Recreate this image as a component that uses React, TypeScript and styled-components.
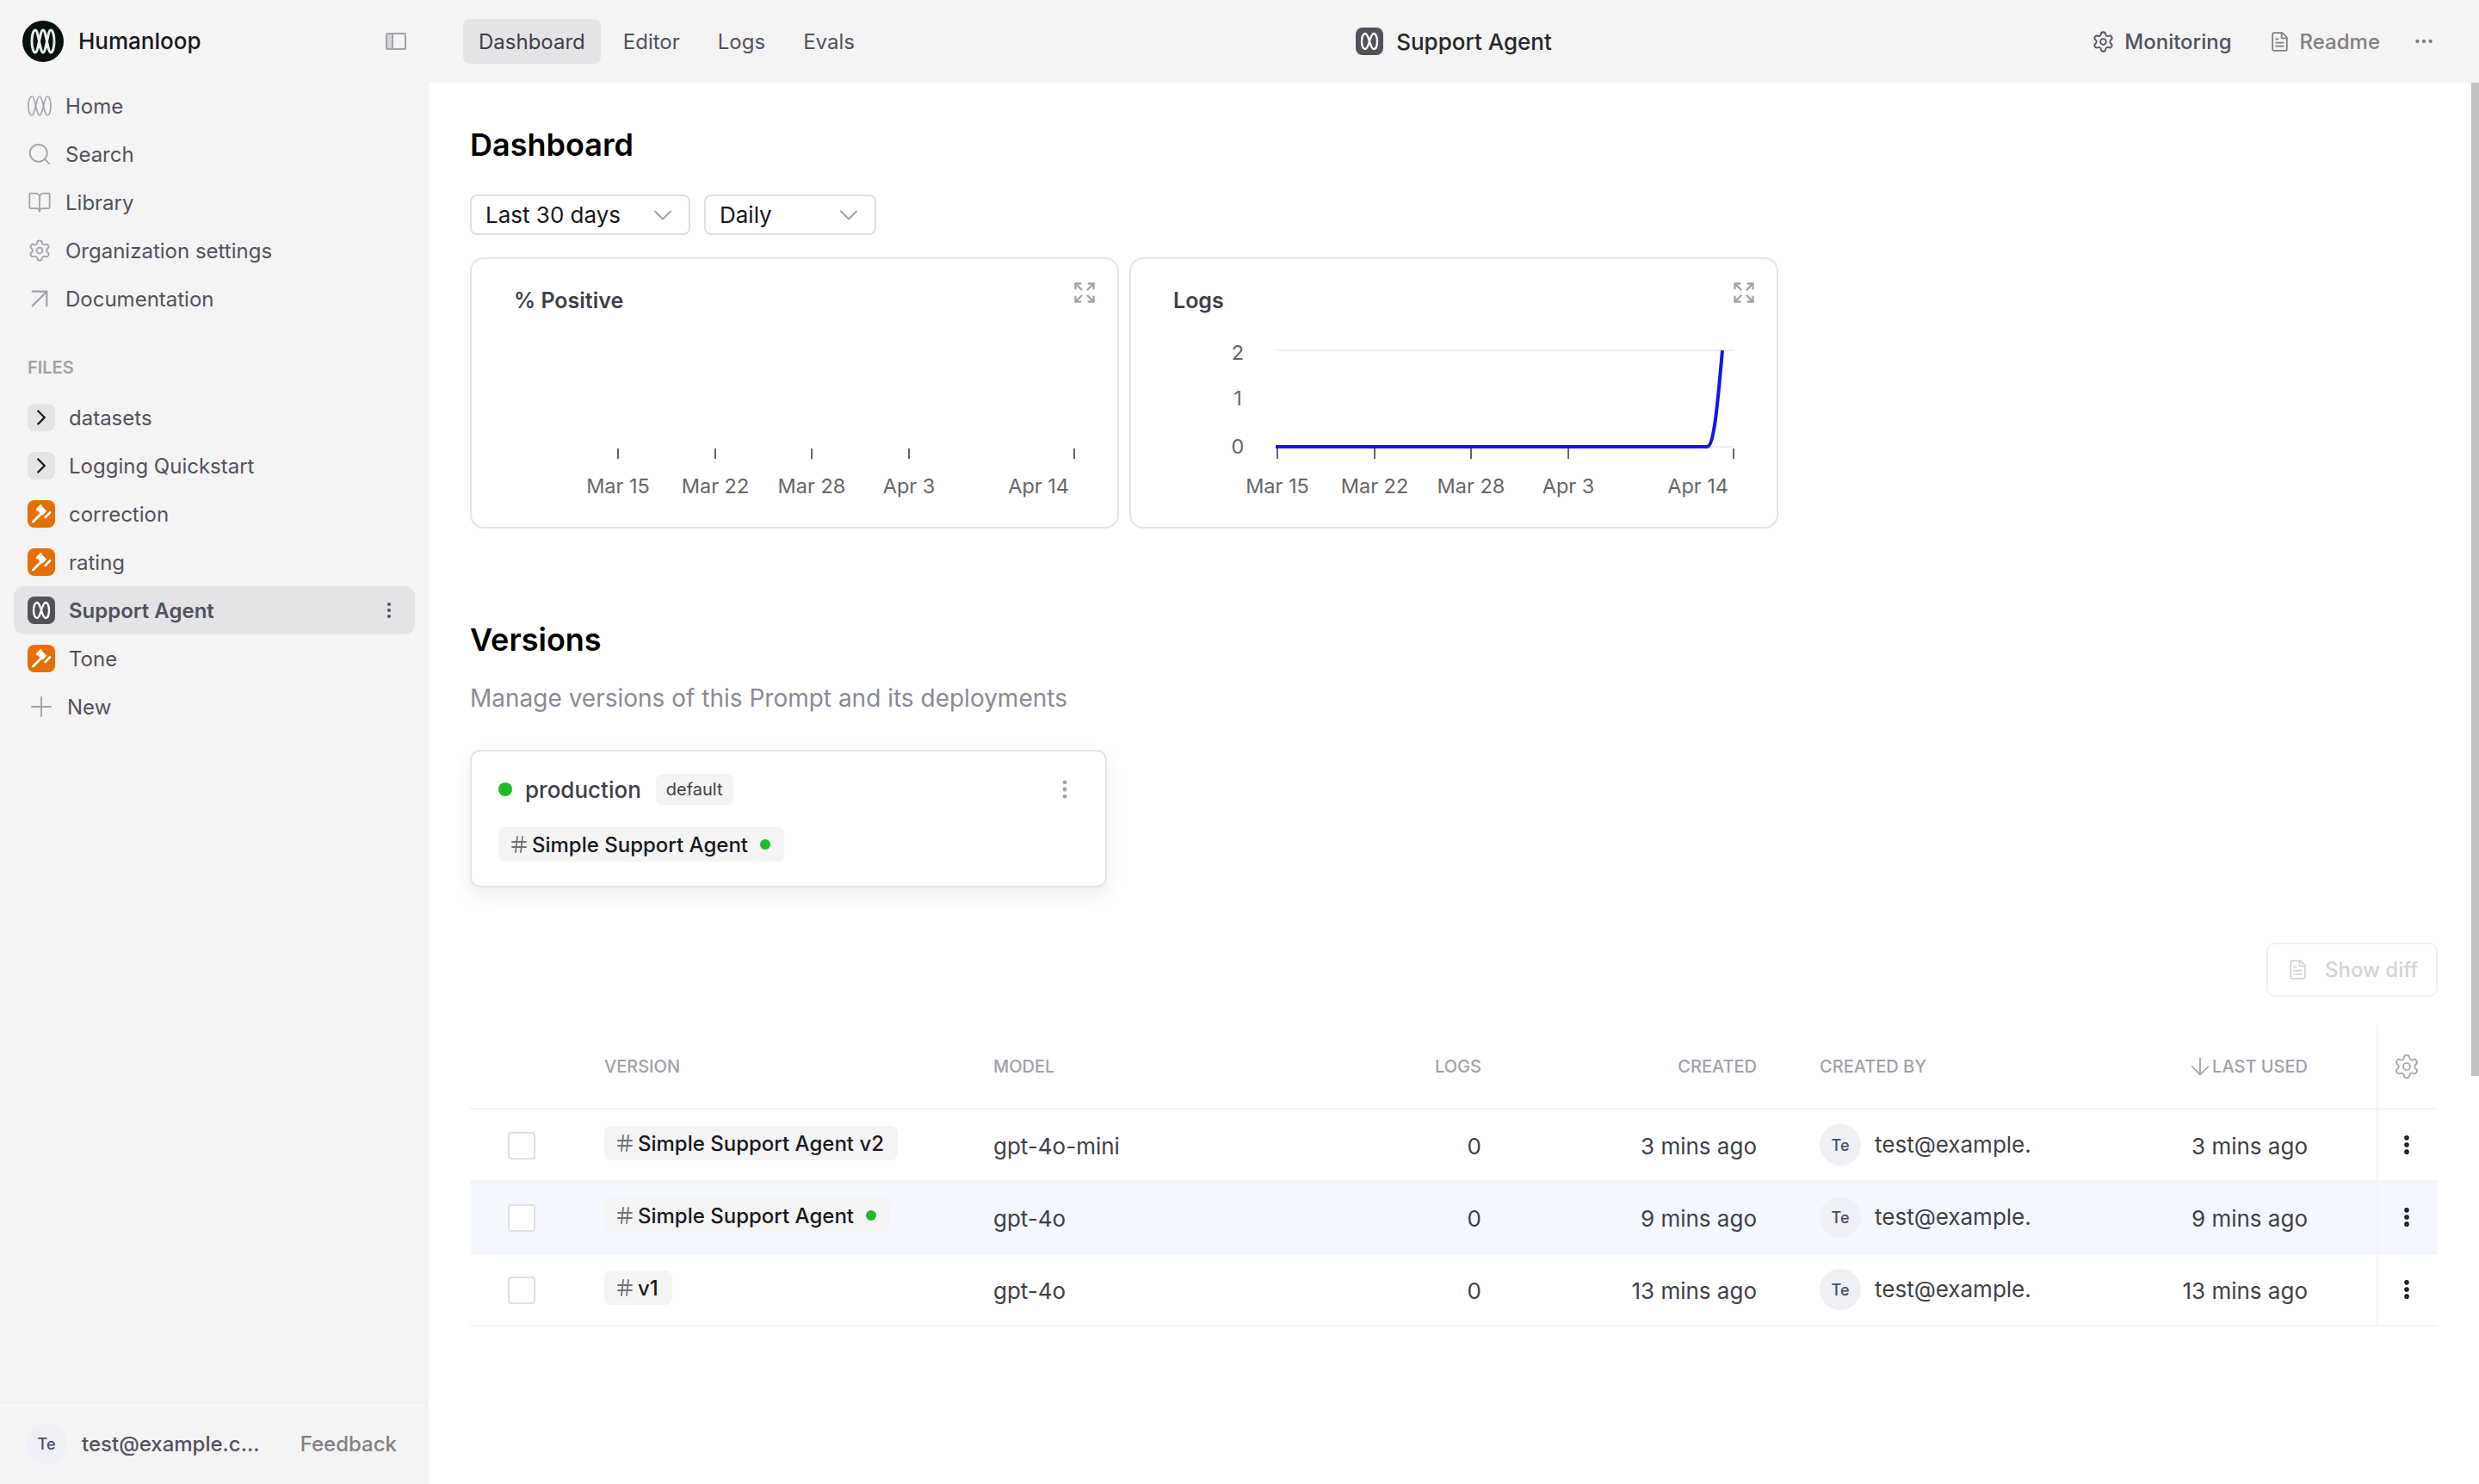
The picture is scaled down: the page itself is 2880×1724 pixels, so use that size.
import styled, { createGlobalStyle } from "styled-components";
import {
  ArrowDown,
  ArrowUpRight,
  BookOpen,
  ChevronDown,
  ChevronRight,
  Ellipsis,
  EllipsisVertical,
  Expand,
  FileText,
  Hash,
  Plus,
  Search,
  Settings,
} from "lucide-react";

const GlobalStyle = createGlobalStyle`
  html, body {
    margin: 0;
    padding: 0;
    height: 1724px;
    overflow: hidden;
    background: #ffffff;
    font-family: Inter, "Liberation Sans", sans-serif;
  }
  * {
    box-sizing: border-box;
  }
`;

const Shell = styled.div`
  display: grid;
  grid-template-columns: 498px 1fr;
  height: 1724px;
  background: #f4f4f5;
`;

/* sidebar */

const Sidebar = styled.aside`
  display: flex;
  flex-direction: column;
  height: 1724px;
`;

const Brand = styled.div`
  display: flex;
  align-items: center;
  height: 95px;
  padding: 0 26px;
  flex-shrink: 0;
`;

const BrandName = styled.span`
  margin-left: 17px;
  font-size: 26px;
  font-weight: 500;
  color: #18181b;
`;

const PanelButton = styled.span`
  display: flex;
  margin-left: auto;
`;

const NavRow = styled.div`
  display: flex;
  align-items: center;
  gap: 16px;
  height: 56px;
  padding-left: 32px;
  font-size: 24px;
  color: #52525b;
  svg {
    color: #a1a1aa;
    flex-shrink: 0;
  }
`;

const NavIcon = styled.span`
  display: flex;
  justify-content: center;
  width: 28px;
`;

const FilesLabel = styled.div`
  margin: 38px 0 16px 32px;
  font-size: 20px;
  line-height: 28px;
  font-weight: 600;
  color: #a1a1aa;
`;

const FileList = styled.div`
  padding: 0 16px;
`;

const FileRow = styled.div<{ $active?: boolean }>`
  display: flex;
  align-items: center;
  gap: 16px;
  height: 56px;
  padding: 0 18px 0 16px;
  border-radius: 12px;
  font-size: 24px;
  font-weight: ${(props) => (props.$active ? 600 : 400)};
  color: #52525b;
  background-color: ${(props) => (props.$active ? "#e4e4e7" : "transparent")};
`;

const FileIconBox = styled.span<{ $bg: string }>`
  display: flex;
  align-items: center;
  justify-content: center;
  width: 32px;
  height: 32px;
  border-radius: 8px;
  flex-shrink: 0;
  background-color: ${(props) => props.$bg};
  color: #18181b;
`;

const RowMenu = styled.span`
  display: flex;
  margin-left: auto;
  color: #52525b;
`;

const NewIcon = styled.span`
  display: flex;
  justify-content: center;
  width: 32px;
  margin-right: -2px;
  color: #a1a1aa;
  svg {
    flex-shrink: 0;
  }
`;

const SideFooter = styled.div`
  display: flex;
  align-items: center;
  height: 96px;
  width: 496px;
  margin-top: auto;
  padding: 0 35px 0 30px;
  border-top: 2px solid #efefef;
`;

const Avatar = styled.span`
  display: flex;
  align-items: center;
  justify-content: center;
  width: 48px;
  height: 48px;
  border-radius: 50%;
  flex-shrink: 0;
  background-color: #eef0f6;
  color: #434c6b;
  font-size: 18px;
  font-weight: 500;
`;

const FooterMail = styled.span`
  margin-left: 17px;
  font-size: 24px;
  font-weight: 500;
  color: #52525b;
`;

const Feedback = styled.span`
  margin-left: auto;
  font-size: 24px;
  font-weight: 500;
  color: #808080;
`;

/* top bar */

const Column = styled.div`
  display: flex;
  flex-direction: column;
  height: 1724px;
  min-width: 0;
`;

const TopBar = styled.header`
  display: grid;
  grid-template-columns: 1fr auto 1fr;
  align-items: center;
  height: 96px;
  flex-shrink: 0;
`;

const Tabs = styled.nav`
  display: flex;
  gap: 8px;
  padding-left: 40px;
`;

const Tab = styled.span<{ $active?: boolean }>`
  display: flex;
  align-items: center;
  height: 52px;
  padding: 0 18px;
  border-radius: 8px;
  font-size: 24px;
  color: ${(props) => (props.$active ? "#3f3f46" : "#52525b")};
  background-color: ${(props) => (props.$active ? "#e4e4e7" : "transparent")};
`;

const PageTitle = styled.div`
  display: flex;
  align-items: center;
  gap: 15px;
  font-size: 26px;
  font-weight: 500;
  color: #27272a;
`;

const TopActions = styled.div`
  display: flex;
  align-items: center;
  justify-content: flex-end;
  gap: 43px;
  padding-right: 51px;
`;

const TopAction = styled.span<{ $muted?: boolean }>`
  display: flex;
  align-items: center;
  gap: 11px;
  font-size: 24px;
  font-weight: 500;
  color: ${(props) => (props.$muted ? "#808080" : "#52525b")};
`;

const MoreIcon = styled.span`
  display: flex;
  margin-left: -5px;
  color: #808080;
`;

/* main */

const Main = styled.main`
  position: relative;
  flex: 1;
  padding: 50px 48px 0 48px;
  background: #ffffff;
`;

const ScrollThumb = styled.div`
  position: absolute;
  top: 0;
  right: 0;
  width: 9px;
  height: 1154px;
  background: #c1c1c1;
`;

const Heading = styled.h2`
  margin: 0;
  font-size: 36px;
  line-height: 44px;
  font-weight: 600;
  color: #000000;
`;

const Filters = styled.div`
  display: flex;
  gap: 16px;
  margin-top: 36px;
`;

const Select = styled.div<{ $width: number }>`
  display: flex;
  align-items: center;
  justify-content: space-between;
  width: ${(props) => props.$width}px;
  height: 47px;
  padding: 0 12px 0 16px;
  border: 2px solid #e0e0e3;
  border-radius: 8px;
  font-size: 26px;
  color: #18181b;
  svg {
    color: #a1a1aa;
  }
`;

const Charts = styled.div`
  display: flex;
  gap: 12px;
  margin-top: 26px;
`;

const ChartCard = styled.section`
  display: flex;
  flex-direction: column;
  width: 754px;
  height: 315px;
  border: 2px solid #e4e4e7;
  border-radius: 16px;
`;

const ChartHead = styled.div`
  display: flex;
  justify-content: space-between;
  height: 64px;
  padding: 0 24px 0 49px;
  color: #a1a1aa;
`;

const ChartTitle = styled.h3`
  margin: 31px 0 0;
  font-size: 25px;
  line-height: 34px;
  font-weight: 600;
  color: #3f3f46;
`;

const ExpandBox = styled.span`
  margin-top: 25px;
`;

const ChartText = styled.text`
  font-family: Inter, "Liberation Sans", sans-serif;
  font-size: 23.5px;
  fill: #666666;
`;

const Versions = styled(Heading)`
  margin-top: 107px;
`;

const Subtitle = styled.p`
  margin: 26px 0 0;
  font-size: 28px;
  line-height: 40px;
  color: #8a8a94;
`;

const DeployCard = styled.div`
  display: flex;
  flex-direction: column;
  gap: 26px;
  width: 740px;
  height: 160px;
  margin-top: 40px;
  padding: 26px 33px 0 31px;
  border: 2px solid #e4e4e7;
  border-radius: 12px;
  box-shadow: 0 8px 20px rgba(0, 0, 0, 0.08);
`;

const DeployHead = styled.div`
  display: flex;
  align-items: center;
  height: 36px;
`;

const GreenDot = styled.span<{ $size: number }>`
  width: ${(props) => props.$size}px;
  height: ${(props) => props.$size}px;
  border-radius: 50%;
  flex-shrink: 0;
  background-color: #1fba25;
`;

const EnvName = styled.span`
  margin-left: 15px;
  font-size: 26px;
  font-weight: 500;
  color: #3f3f46;
`;

const DefaultChip = styled.span`
  display: flex;
  align-items: center;
  height: 36px;
  margin-left: 17px;
  padding: 0 12px;
  border-radius: 8px;
  background-color: #f4f4f5;
  font-size: 20px;
  color: #3f3f46;
`;

const CardMenu = styled.span`
  display: flex;
  margin-left: auto;
  color: #a1a1aa;
`;

const VersionChip = styled.span`
  display: inline-flex;
  align-items: center;
  align-self: flex-start;
  height: 40px;
  padding: 0 16px 0 12px;
  border-radius: 8px;
  background-color: #f4f4f5;
  font-size: 24px;
  font-weight: 500;
  color: #18181b;
  svg {
    color: #71717a;
    margin-right: 3px;
  }
`;

const ChipDot = styled(GreenDot)`
  margin-left: 14px;
`;

const DiffBar = styled.div`
  display: flex;
  justify-content: flex-end;
  margin-top: 64px;
`;

const DiffButton = styled.span`
  display: flex;
  align-items: center;
  gap: 19px;
  height: 63px;
  width: 199px;
  padding-left: 22px;
  border: 2px solid #f1f1f2;
  border-radius: 10px;
  font-size: 24px;
  font-weight: 500;
  color: #d4d4d8;
`;

const Table = styled.div`
  margin-top: 33px;
`;

const tableColumns = "156px 452px 300px 267px 320px 320px 320px 80px 71px";

const HeadRow = styled.div`
  display: grid;
  grid-template-columns: ${tableColumns};
  align-items: center;
  height: 98px;
  border-bottom: 2px solid #f4f4f5;
`;

const BodyRow = styled.div<{ $active?: boolean }>`
  display: grid;
  grid-template-columns: ${tableColumns};
  align-items: center;
  height: 84px;
  border-bottom: 2px solid #f4f4f5;
  background-color: ${(props) => (props.$active ? "#f4f7fd" : "transparent")};
`;

const HeadCell = styled.div<{ $right?: boolean; $indent?: boolean }>`
  display: flex;
  align-items: center;
  justify-content: ${(props) => (props.$right ? "flex-end" : "flex-start")};
  padding-left: ${(props) => (props.$indent ? "73px" : "0")};
  font-size: 20px;
  font-weight: 500;
  color: #a1a1aa;
  svg {
    margin-right: -2px;
    flex-shrink: 0;
  }
`;

const Cell = styled.div<{ $right?: boolean }>`
  padding-top: 2px;
  font-size: 26px;
  color: #3f3f46;
  text-align: ${(props) => (props.$right ? "right" : "left")};
`;

const CheckCell = styled.div`
  padding: 2px 0 0 44px;
`;

const Checkbox = styled.span`
  display: block;
  width: 32px;
  height: 32px;
  border: 2px solid #e0e0e3;
  border-radius: 4px;
  background: #ffffff;
`;

const RowChip = styled(VersionChip)`
  display: inline-flex;
  margin-top: -4px;
`;

const UserCell = styled.div`
  display: flex;
  align-items: center;
  gap: 16px;
  padding-left: 73px;
  min-width: 0;
`;

const UserMail = styled.span`
  width: 184px;
  margin-top: -2px;
  overflow: hidden;
  white-space: nowrap;
  font-size: 26px;
  color: #3f3f46;
`;

const ActionCell = styled.div`
  grid-column: 9;
  display: flex;
  align-items: center;
  justify-content: center;
  align-self: stretch;
  padding-right: 3px;
  border-left: 2px solid #f4f4f5;
  color: #18181b;
`;

const GearCell = styled(ActionCell)`
  color: #a1a1aa;
`;

const logoPath =
  "M11 24C11 16 13 11 15 11C17 11 18 17 19.5 24C21 31 22 37 24 37C26 37 27 31 28.5 24C30 17 31 11 33 11C35 11 37 16 37 24C37 32 35 37 33 37C31 37 30 31 28.5 24C27 17 26 11 24 11C22 11 21 17 19.5 24C18 31 17 37 15 37C13 37 11 32 11 24Z";

function LoopLogo() {
  return (
    <svg width="48" height="48" viewBox="0 0 48 48">
      <circle cx="24" cy="24" r="24" fill="#07120f" />
      <path d={logoPath} fill="none" stroke="#e8ecea" strokeWidth="3" />
    </svg>
  );
}

function HomeLoops() {
  return (
    <svg width="28" height="24" viewBox="10 10 28 28" preserveAspectRatio="none">
      <path d={logoPath} fill="none" stroke="#a1a1aa" strokeWidth="1.6" />
    </svg>
  );
}

function PanelIcon() {
  return (
    <svg width="24" height="20" viewBox="0 0 24 20">
      <rect x="1" y="1" width="22" height="18" rx="1.5" fill="none" stroke="#a1a1aa" strokeWidth="2" />
      <rect x="2" y="2" width="6" height="16" fill="#d4d4d8" />
      <path d="M8 1v18" stroke="#a1a1aa" strokeWidth="2" />
    </svg>
  );
}

function PromptIcon() {
  return (
    <FileIconBox $bg="#52525b">
      <svg width="32" height="32" viewBox="0 0 32 32">
        <path
          d="M7 16C7 10 9 7 11 7C13 7 14.5 11 16 16C17.5 21 19 25 21 25C23 25 25 22 25 16C25 10 23 7 21 7C19 7 17.5 11 16 16C14.5 21 13 25 11 25C9 25 7 22 7 16Z"
          fill="none"
          stroke="#ffffff"
          strokeWidth="2.4"
        />
      </svg>
    </FileIconBox>
  );
}

function GavelIcon() {
  return (
    <FileIconBox $bg="#e46f04">
      <svg width="32" height="32" viewBox="0 0 32 32">
        <g fill="none" stroke="#ffffff" strokeLinecap="round">
          <path d="M6.5 25 16 15.5" strokeWidth="3" />
          <path d="M14.2 9.7 19.8 15.3" strokeWidth="7" strokeLinecap="butt" />
          <path d="M11 11 15.5 6.5" strokeWidth="2.6" />
          <path d="M20.5 20 26 14.5" strokeWidth="2.6" />
        </g>
      </svg>
    </FileIconBox>
  );
}

const ticks = [
  { x: 170, label: "Mar 15" },
  { x: 283, label: "Mar 22" },
  { x: 395, label: "Mar 28" },
  { x: 508, label: "Apr 3" },
];

function Chart({ withData }: { withData?: boolean }) {
  return (
    <svg width="750" height="247" viewBox="0 0 750 247">
      {withData && (
        <>
          <path d="M168 42H701M168 154H701" stroke="#efefef" strokeWidth="2" />
          <ChartText x="124" y="53" textAnchor="middle">2</ChartText>
          <ChartText x="124" y="106" textAnchor="middle">1</ChartText>
          <ChartText x="124" y="162" textAnchor="middle">0</ChartText>
        </>
      )}
      {ticks.map((tick) => (
        <g key={tick.x}>
          <path d={`M${tick.x} 156V168`} stroke="#666666" strokeWidth="2" />
          <ChartText x={tick.x} y="208" textAnchor="middle">{tick.label}</ChartText>
        </g>
      ))}
      <path d="M700 156V168" stroke="#666666" strokeWidth="2" />
      <ChartText x="694" y="208" textAnchor="end">Apr 14</ChartText>
      {withData && (
        <path
          d="M168 154H669C677 154 681 110 687 42"
          fill="none"
          stroke="#1414f0"
          strokeWidth="4"
        />
      )}
    </svg>
  );
}

const versionRows = [
  { name: "Simple Support Agent v2", model: "gpt-4o-mini", created: "3 mins ago" },
  { name: "Simple Support Agent", model: "gpt-4o", created: "9 mins ago", live: true },
  { name: "v1", model: "gpt-4o", created: "13 mins ago" },
];

const navItems = [
  { label: "Home", icon: <HomeLoops /> },
  { label: "Search", icon: <Search size={30} strokeWidth={1.4} /> },
  { label: "Library", icon: <BookOpen size={28} strokeWidth={1.5} /> },
  { label: "Organization settings", icon: <Settings size={28} strokeWidth={1.5} /> },
  { label: "Documentation", icon: <ArrowUpRight size={40} strokeWidth={1.3} /> },
];

function App() {
  return (
    <>
      <GlobalStyle />
      <Shell>
        <Sidebar>
          <Brand>
            <LoopLogo />
            <BrandName>Humanloop</BrandName>
            <PanelButton>
              <PanelIcon />
            </PanelButton>
          </Brand>
          {navItems.map((item) => (
            <NavRow key={item.label}>
              <NavIcon>{item.icon}</NavIcon>
              {item.label}
            </NavRow>
          ))}
          <FilesLabel>FILES</FilesLabel>
          <FileList>
            <FileRow>
              <FileIconBox $bg="#e4e4e7">
                <ChevronRight size={30} strokeWidth={1.9} />
              </FileIconBox>
              datasets
            </FileRow>
            <FileRow>
              <FileIconBox $bg="#e4e4e7">
                <ChevronRight size={30} strokeWidth={1.9} />
              </FileIconBox>
              Logging Quickstart
            </FileRow>
            <FileRow>
              <GavelIcon />
              correction
            </FileRow>
            <FileRow>
              <GavelIcon />
              rating
            </FileRow>
            <FileRow $active>
              <PromptIcon />
              Support Agent
              <RowMenu>
                <EllipsisVertical size={24} strokeWidth={2.2} />
              </RowMenu>
            </FileRow>
            <FileRow>
              <GavelIcon />
              Tone
            </FileRow>
            <FileRow>
              <NewIcon>
                <Plus size={38} strokeWidth={1.2} />
              </NewIcon>
              New
            </FileRow>
          </FileList>
          <SideFooter>
            <Avatar>Te</Avatar>
            <FooterMail>test@example.c...</FooterMail>
            <Feedback>Feedback</Feedback>
          </SideFooter>
        </Sidebar>
        <Column>
          <TopBar>
            <Tabs>
              <Tab $active>Dashboard</Tab>
              <Tab>Editor</Tab>
              <Tab>Logs</Tab>
              <Tab>Evals</Tab>
            </Tabs>
            <PageTitle>
              <PromptIcon />
              Support Agent
            </PageTitle>
            <TopActions>
              <TopAction>
                <Settings size={27} strokeWidth={1.6} color="#52525b" />
                Monitoring
              </TopAction>
              <TopAction $muted>
                <FileText size={25} strokeWidth={1.7} />
                Readme
              </TopAction>
              <MoreIcon>
                <Ellipsis size={26} strokeWidth={2} />
              </MoreIcon>
            </TopActions>
          </TopBar>
          <Main>
            <ScrollThumb />
            <Heading>Dashboard</Heading>
            <Filters>
              <Select $width={256}>
                Last 30 days
                <ChevronDown size={36} strokeWidth={1.4} />
              </Select>
              <Select $width={200}>
                Daily
                <ChevronDown size={36} strokeWidth={1.4} />
              </Select>
            </Filters>
            <Charts>
              <ChartCard>
                <ChartHead>
                  <ChartTitle>% Positive</ChartTitle>
                  <ExpandBox>
                    <Expand size={28} strokeWidth={2} />
                  </ExpandBox>
                </ChartHead>
                <Chart />
              </ChartCard>
              <ChartCard>
                <ChartHead>
                  <ChartTitle>Logs</ChartTitle>
                  <ExpandBox>
                    <Expand size={28} strokeWidth={2} />
                  </ExpandBox>
                </ChartHead>
                <Chart withData />
              </ChartCard>
            </Charts>
            <Versions>Versions</Versions>
            <Subtitle>Manage versions of this Prompt and its deployments</Subtitle>
            <DeployCard>
              <DeployHead>
                <GreenDot $size={16} />
                <EnvName>production</EnvName>
                <DefaultChip>default</DefaultChip>
                <CardMenu>
                  <EllipsisVertical size={28} strokeWidth={2.2} />
                </CardMenu>
              </DeployHead>
              <VersionChip>
                <Hash size={24} strokeWidth={1.8} />
                Simple Support Agent
                <ChipDot $size={12} />
              </VersionChip>
            </DeployCard>
            <DiffBar>
              <DiffButton>
                <FileText size={25} strokeWidth={1.7} />
                Show diff
              </DiffButton>
            </DiffBar>
            <Table>
              <HeadRow>
                <div />
                <HeadCell>VERSION</HeadCell>
                <HeadCell>MODEL</HeadCell>
                <HeadCell $right>LOGS</HeadCell>
                <HeadCell $right>CREATED</HeadCell>
                <HeadCell $indent>CREATED BY</HeadCell>
                <HeadCell $right>
                  <ArrowDown size={32} strokeWidth={1.3} />
                  LAST USED
                </HeadCell>
                <GearCell>
                  <Settings size={32} strokeWidth={1.3} />
                </GearCell>
              </HeadRow>
              {versionRows.map((row) => (
                <BodyRow key={row.name} $active={row.live}>
                  <CheckCell>
                    <Checkbox />
                  </CheckCell>
                  <div>
                    <RowChip>
                      <Hash size={24} strokeWidth={1.8} />
                      {row.name}
                      {row.live && <ChipDot $size={12} />}
                    </RowChip>
                  </div>
                  <Cell>{row.model}</Cell>
                  <Cell $right>0</Cell>
                  <Cell $right>{row.created}</Cell>
                  <UserCell>
                    <Avatar>Te</Avatar>
                    <UserMail>test@example.com</UserMail>
                  </UserCell>
                  <Cell $right>{row.created}</Cell>
                  <ActionCell>
                    <EllipsisVertical size={28} strokeWidth={2.8} />
                  </ActionCell>
                </BodyRow>
              ))}
            </Table>
          </Main>
        </Column>
      </Shell>
    </>
  );
}

export default App;
